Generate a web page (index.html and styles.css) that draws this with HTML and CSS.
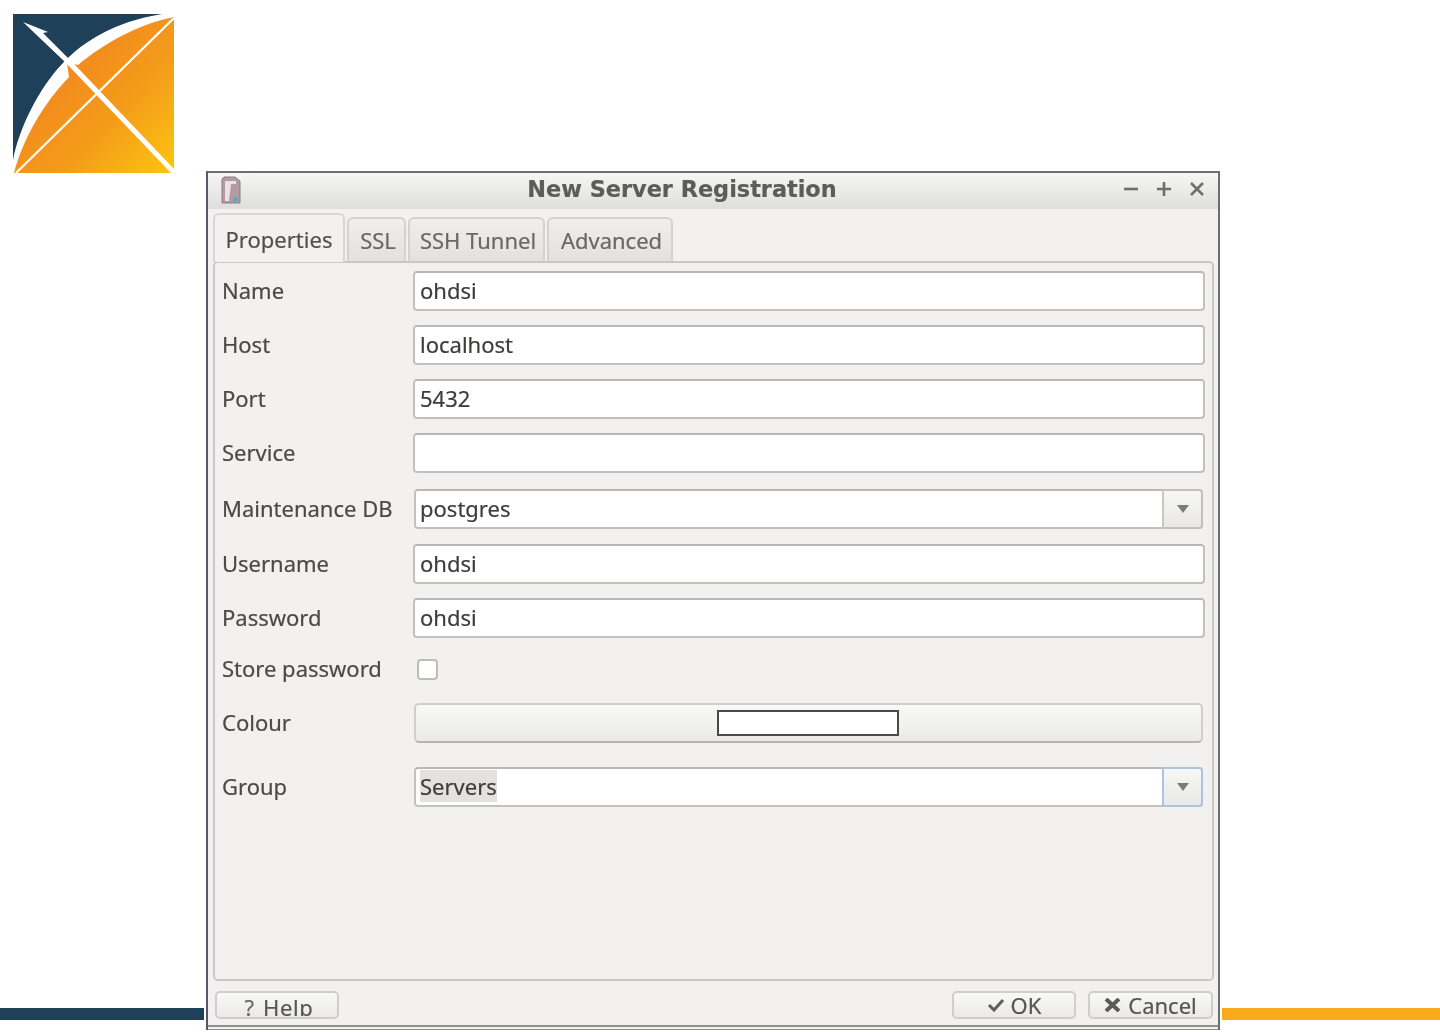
FILE: index.html
```html
<!DOCTYPE html>
<html lang="en">
<head>
<meta charset="utf-8">
<title>New Server Registration</title>
<link rel="stylesheet" href="styles.css">
</head>
<body>
<main class="slide">
  <svg class="logo" viewBox="0 0 162 160" width="162" height="160" aria-label="OHDSI logo">
    <defs>
      <linearGradient id="orange" x1="0.25" y1="0.3" x2="1" y2="1">
        <stop offset="0" stop-color="#f2871f"/>
        <stop offset="0.5" stop-color="#f49c1a"/>
        <stop offset="1" stop-color="#fcc50f"/>
      </linearGradient>
    </defs>
    <path d="M0 0H149C100 8 70 28 50 49C25 75 6 115 0 146Z" fill="#1f4059"/>
    <path d="M161 3V159H1C10 125 30 90 56 63L54 49L65 51C90 30 125 10 161 3Z" fill="url(#orange)"/>
    <path d="M161 4L3 159" stroke="#fff" stroke-width="2.2" fill="none"/>
    <path d="M10 8L35 18L30 19L64 53L161 155V159H158L52 48Z" fill="#fff"/>
  </svg>

  <section class="window">
    <header class="titlebar">
      <svg class="app-icon" viewBox="0 0 20 28" width="20" height="28" aria-hidden="true">
        <path d="M3 1H14L19 5V27H1V3Z" fill="#b49aa3" stroke="#8b7d84" stroke-width="1"/>
        <path d="M4 5H15V8H10L8 25H4Z" fill="#e9e3e4"/>
        <circle cx="14.500" cy="23.500" r="2" fill="#37b4bd"/>
      </svg>
      <h1 class="title">New Server Registration</h1>
      <div class="controls" aria-hidden="true">
        <svg viewBox="0 0 16 16" width="16" height="16"><path d="M1 8H15" class="glyph"/></svg>
        <svg viewBox="0 0 16 16" width="16" height="16"><path d="M1 8H15M8 1V15" class="glyph"/></svg>
        <svg viewBox="0 0 16 16" width="16" height="16"><path d="M2 2L14 14M14 2L2 14" class="glyph"/></svg>
      </div>
    </header>

    <div class="content">
      <nav class="tabs">
        <span class="tab tab-active">Properties</span>
        <span class="tab tab-ssl">SSL</span>
        <span class="tab tab-tunnel">SSH Tunnel</span>
        <span class="tab tab-adv">Advanced</span>
      </nav>

      <form class="panel">
        <div class="row"><span class="label">Name</span><div class="field">ohdsi</div></div>
        <div class="row"><span class="label">Host</span><div class="field">localhost</div></div>
        <div class="row"><span class="label">Port</span><div class="field">5432</div></div>
        <div class="row"><span class="label">Service</span><div class="field"></div></div>
        <div class="row row-combo"><span class="label">Maintenance DB</span>
          <div class="combo"><span class="combo-text">postgres</span><span class="combo-btn"><i class="arrow"></i></span></div></div>
        <div class="row row-after-combo"><span class="label">Username</span><div class="field">ohdsi</div></div>
        <div class="row"><span class="label">Password</span><div class="field">ohdsi</div></div>
        <div class="row row-check"><span class="label">Store password</span><span class="check"></span></div>
        <div class="row row-colour"><span class="label">Colour</span>
          <div class="colour-btn"><span class="swatch"></span></div></div>
        <div class="row row-group"><span class="label">Group</span>
          <div class="combo combo-focus"><span class="combo-text"><span class="selected">Servers</span></span><span class="combo-btn"><i class="arrow"></i></span></div></div>
      </form>

      <footer class="actions">
        <button type="button" class="btn btn-help"><span class="clip"><span class="btn-glyph">?</span> Help</span></button>
        <span class="spacer"></span>
        <button type="button" class="btn">
          <svg viewBox="0 0 18 14" width="18" height="14" aria-hidden="true"><path d="M2 7L7 12L16 2" class="check-mark"/></svg>OK</button>
        <button type="button" class="btn btn-cancel">
          <svg viewBox="0 0 17 14" width="17" height="14" aria-hidden="true"><path d="M2 1L15 13M15 1L2 13" class="cross-mark"/></svg>Cancel</button>
      </footer>
    </div>
    <div class="bottom-strip"></div>
  </section>

  <div class="bar bar-left"></div>
  <div class="bar bar-right"></div>
</main>
</body>
</html>
```

FILE: styles.css
```css
* { box-sizing: border-box; }
html, body { margin: 0; padding: 0; background: #fff; }
body { overflow: hidden; }

.slide {
  position: relative;
  width: 1440px;
  height: 1032px;
  overflow: hidden;
  font-family: "Noto Sans", "Open Sans", sans-serif;
  font-size: 22px;
  color: #4a4a48;
  -webkit-text-stroke: 0.2px currentColor;
}

.logo { position: absolute; left: 13px; top: 14px; filter: blur(0.4px); }

.bar { position: absolute; top: 1008px; height: 12px; }
.bar-left { left: 0; width: 204px; background: #1f4059; }
.bar-right { left: 1222px; right: 0; background: #f9ab1b; }

.window {
  position: absolute;
  left: 206px;
  top: 171px;
  width: 1014px;
  height: 859px;
  display: flex;
  flex-direction: column;
  background: #f2f1ef;
  border: 2px solid #6d6d6d;
  border-left-color: #5a5470;
  border-bottom: 0;
  filter: blur(0.35px);
}

.titlebar {
  flex: 0 0 36px;
  display: flex;
  align-items: center;
  padding: 0 13px 0 13px;
  background: linear-gradient(#f6f6f5, #dededc);
}
.app-icon { flex: none; margin-bottom: 2px; }
.title {
  flex: 1;
  margin: 0 0 4px;
  text-align: center;
  font-family: "DejaVu Sans", sans-serif;
  font-size: 22.400px;
  font-weight: 700;
  color: #5c5c5a;
}
.controls { display: flex; gap: 17px; margin-bottom: 4px; }
.glyph { stroke: #6f6f6d; stroke-width: 2.6; fill: none; }

.content {
  flex: 1;
  display: flex;
  flex-direction: column;
  padding: 5px 4px 0 5px;
  min-height: 0;
}

.tabs {
  display: flex;
  align-items: flex-end;
  gap: 2px;
  height: 47px;
  position: relative;
  z-index: 1;
}
.tab {
  height: 44px;
  display: flex;
  align-items: center;
  justify-content: center;
  padding-left: 3px;
  border: 2px solid #d3d2ce;
  border-bottom: 0;
  border-radius: 6px 6px 0 0;
  background: linear-gradient(#f0efed, #e2e1de);
  color: #686866;
}
.tab-active {
  width: 132px;
  height: 49px;
  padding-left: 0;
  background: #f2f1ef;
  color: #505050;
  margin-bottom: -1px;
  border-color: #d8d7d3;
}
.tab-ssl { width: 59px; }
.tab-tunnel { width: 137px; }
.tab-adv { width: 126px; }

.panel {
  flex: none;
  height: 720px;
  border: 2px solid #c9c8c4;
  border-radius: 5px;
  padding: 8px 7px 0 7px;
  display: flex;
  flex-direction: column;
  gap: 14px;
}
.row { display: flex; align-items: center; height: 40px; flex: none; }
.row-combo { margin-top: 2px; }
.row-after-combo { margin-top: 1px; }
.row-check { margin-top: -3px; }
.row-colour { margin-top: 0; }
.row-group { margin-top: 10px; }

.label { flex: 0 0 191px; white-space: nowrap; padding-bottom: 2px; }

.field, .combo {
  height: 40px;
  background: #fff;
  border-radius: 4px;
  border: 2px solid #c2c1bd;
  border-top-color: #b9b8b4;
  color: #3d3d3b;
  display: flex;
  align-items: center;
}
.field { flex: 0 0 792px; padding: 0 0 2px 5px; }
.combo { flex: 0 0 789px; margin-left: 1px; padding-left: 4px; }
.combo-text { flex: 1; padding-bottom: 2px; }
.selected { background: #e3e2e0; padding: 1px 0; }
.combo-btn {
  flex: 0 0 41px;
  align-self: stretch;
  margin: -2px -2px -2px 0;
  display: flex;
  align-items: center;
  justify-content: center;
  border-left: 2px solid #c8c7c3;
  border-top: 2px solid #c2c1bd;
  border-right: 2px solid #c2c1bd;
  border-bottom: 2px solid #c2c1bd;
  border-radius: 0 4px 4px 0;
  background: linear-gradient(#f7f7f6, #e9e8e6);
}
.arrow {
  width: 0; height: 0;
  border-left: 6px solid transparent;
  border-right: 6px solid transparent;
  border-top: 8px solid #7b7b79;
}
.combo-focus .combo-btn { border-color: #a9c5e0; }

.check {
  width: 21px;
  height: 21px;
  margin-left: 4px;
  background: #fff;
  border: 2px solid #bdbcb8;
  border-radius: 4px;
}

.colour-btn {
  flex: 0 0 789px;
  margin-left: 1px;
  height: 40px;
  display: flex;
  align-items: center;
  justify-content: center;
  border: 2px solid #d0cfcb;
  border-bottom-color: #b5b4b0;
  border-radius: 5px;
  background: linear-gradient(#f9f9f8, #eaeae8);
}
.swatch {
  width: 182px;
  height: 26px;
  margin-right: 2px;
  background: #fff;
  border: 2px solid #4a4a4a;
}

.actions {
  flex: none;
  display: flex;
  gap: 12px;
  padding: 10px 1px 0 2px;
}
.spacer { flex: 1; }
.btn {
  width: 124px;
  height: 28px;
  padding: 0;
  display: flex;
  align-items: center;
  justify-content: center;
  gap: 6px;
  border: 2px solid #cfcec9;
  border-radius: 5px;
  background: linear-gradient(#f8f8f7, #ebeae8);
  font: inherit;
  line-height: 24px;
  color: #565654;
}
.btn-help { padding-left: 4px; }
.btn-cancel { width: 125px; gap: 7px; }
.clip { height: 21px; line-height: 24px; overflow: hidden; display: block; letter-spacing: 0.6px; }
.btn-glyph { color: #6a6a68; margin-right: 2px; }
.check-mark { stroke: #5e5e5c; stroke-width: 3; fill: none; }
.cross-mark { stroke: #5a5a58; stroke-width: 4; fill: none; }

.bottom-strip {
  margin-top: 6px;
  height: 5px;
  border-top: 2px solid #8f8f8d;
  border-bottom: 1px solid #8f8f8d;
  background: #f2f1ef;
}
```
